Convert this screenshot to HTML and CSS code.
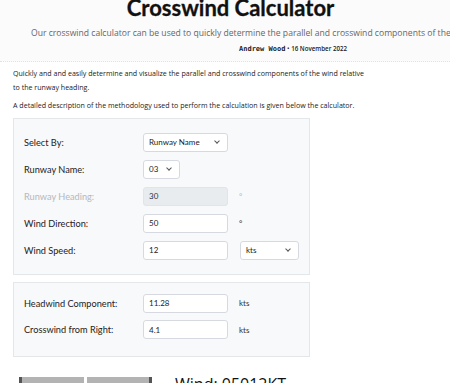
FILE: index.html
```html
<!DOCTYPE html>
<html>
<head>
<meta charset="utf-8">
<link rel="stylesheet" href="styles.css">
</head>
<body>
<header class="hero">
  <h1 class="title">Crosswind Calculator</h1>
  <p class="subtitle">Our crosswind calculator can be used to quickly determine the parallel and crosswind components of the wind relative to the runway heading.</p>
  <p class="byline"><span class="author">Andrew Wood</span> &bull; <span class="date">16 November 2022</span></p>
</header>
<main class="content">
  <p class="intro">Quickly and and easily determine and visualize the parallel and crosswind components of the wind relative<br>to the runway heading.</p>
  <p class="intro">A detailed description of the methodology used to perform the calculation is given below the calculator.</p>

  <section class="card inputs">
    <div class="row">
      <span class="label">Select By:</span>
      <div class="field select wide">Runway Name<span class="chev"></span></div>
    </div>
    <div class="row">
      <span class="label">Runway Name:</span>
      <div class="field select narrow">03<span class="chev"></span></div>
    </div>
    <div class="row">
      <span class="label disabled">Runway Heading:</span>
      <div class="field wide dis">30</div>
      <span class="unit muted">&deg;</span>
    </div>
    <div class="row">
      <span class="label">Wind Direction:</span>
      <div class="field wide">50</div>
      <span class="unit">&deg;</span>
    </div>
    <div class="row">
      <span class="label">Wind Speed:</span>
      <div class="field wide">12</div>
      <div class="field select units">kts<span class="chev"></span></div>
    </div>
  </section>

  <section class="card outputs">
    <div class="row">
      <span class="label">Headwind Component:</span>
      <div class="field wide tall">11.28</div>
      <span class="unit">kts</span>
    </div>
    <div class="row">
      <span class="label">Crosswind from Right:</span>
      <div class="field wide tall">4.1</div>
      <span class="unit">kts</span>
    </div>
  </section>

  <div class="visual">
    <div class="runway">
      <div class="slab left"></div>
      <div class="slab right"></div>
    </div>
    <div class="wind">Wind: 05012KT</div>
  </div>
</main>
</body>
</html>
```
FILE: styles.css
```css
html, body {
  margin: 0;
  padding: 0;
  background: #fff;
  overflow: hidden;
}
body {
  width: 450px;
  height: 383px;
  font-family: "Open Sans", "Liberation Sans", sans-serif;
  color: #222;
}
.hero {
  background: #fbfbfb;
  border-bottom: 1px dotted #e2e2e2;
  height: 61px;
  overflow: hidden;
}
.title {
  margin: -5px 0 0 11px;
  font-family: Lato, "Liberation Sans", sans-serif;
  font-weight: 700;
  font-size: 22px;
  line-height: 26px;
  text-align: center;
  color: #111;
  -webkit-text-stroke: 0.3px #111;
}
.subtitle {
  margin: 4px 0 0 31px;
  white-space: nowrap;
  font-family: "Open Sans", sans-serif;
  font-size: 8.6px;
  line-height: 16px;
  color: #666;
}
.byline {
  margin: 2px 0 0 239px;
  font-size: 6.5px;
  line-height: 12px;
  color: #222;
  white-space: nowrap;
}
.author {
  font-family: "DejaVu Sans Mono", monospace;
  font-size: 7px;
  font-weight: 700;
}
.date {
  font-family: "Open Sans", sans-serif;
  font-weight: 600;
  font-size: 6.2px;
}
.content {
  padding: 4px 0 0 13px;
}
.intro {
  margin: 0 0 4px;
  font-size: 7.1px;
  line-height: 14px;
  color: #222;
}
.card {
  width: 297px;
  background: #f8f9fa;
  border: 1px solid #e4e7ea;
  box-sizing: border-box;
  display: flex;
  flex-direction: column;
}
.inputs {
  margin-top: 6px;
  padding: 14px 10px 14px 10px;
  gap: 8.5px;
}
.outputs {
  margin-top: 7px;
  padding: 11px 10px 17px 10px;
  gap: 7.5px;
}
.row {
  display: flex;
  align-items: center;
  height: 18.5px;
}
.outputs .row { height: 19px; }
.label {
  width: 119px;
  font-family: Lato, "Liberation Sans", sans-serif;
  font-size: 9.2px;
  color: #222;
}
.label.disabled { color: #b5b8bb; }
.field {
  box-sizing: border-box;
  height: 18.5px;
  border: 1px solid #d6dae0;
  border-radius: 3px;
  background: #fff;
  font-family: Lato, "Liberation Sans", sans-serif;
  font-size: 8px;
  color: #222;
  display: flex;
  align-items: center;
  padding-left: 5px;
}
.field.tall { height: 19px; }
.field.wide { width: 85px; }
.field.narrow { width: 37px; }
.field.units { width: 59px; margin-left: 12px; }
.field.dis { background: #e9ecef; border-color: #e1e4e8; color: #333; }
.select { justify-content: space-between; padding-right: 8px; }
.chev {
  width: 3px;
  height: 3px;
  border-right: 1px solid #555;
  border-bottom: 1px solid #555;
  transform: rotate(45deg);
  margin-top: -3px;
}
.unit {
  margin-left: 11px;
  font-family: Lato, "Liberation Sans", sans-serif;
  font-size: 8px;
  color: #333;
}
.unit.muted { color: #bbb; }
.visual {
  display: flex;
  align-items: flex-start;
  margin-top: 20px;
  padding-left: 6px;
}
.runway {
  display: flex;
  gap: 3px;
  width: 133px;
}
.slab {
  width: 65px;
  height: 20px;
  background: #b3b3b3;
}
.slab.left { border-left: 3px solid #555; box-sizing: border-box; }
.slab.right { border-right: 3px solid #555; box-sizing: border-box; }
.wind {
  margin-left: 23px;
  margin-top: -3px;
  font-family: "Open Sans", sans-serif;
  font-size: 16px;
  line-height: 20px;
  color: #111;
}
```
